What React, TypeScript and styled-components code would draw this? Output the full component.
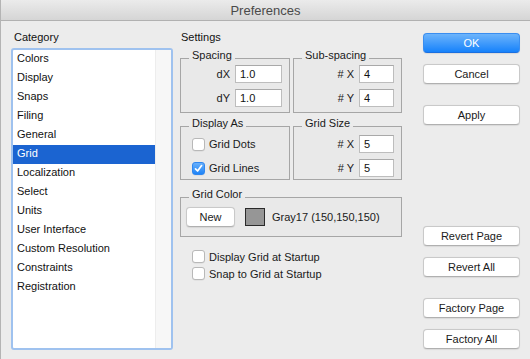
import React, { useState } from 'react';
import styled, { createGlobalStyle } from 'styled-components';

const GlobalStyle = createGlobalStyle`
  html, body {
    margin: 0;
    padding: 0;
    background: #ececec;
  }
  body {
    font-family: 'Liberation Sans', Arial, sans-serif;
    font-size: 11px;
    color: #1a1a1a;
  }
`;

const categories = [
  'Colors',
  'Display',
  'Snaps',
  'Filing',
  'General',
  'Grid',
  'Localization',
  'Select',
  'Units',
  'User Interface',
  'Custom Resolution',
  'Constraints',
  'Registration',
];

const Window = styled.div`
  width: 530px;
  height: 359px;
  box-sizing: border-box;
  border-left: 1px solid #b4b4b4;
  background: #ececec;
  display: flex;
  flex-direction: column;
  overflow: hidden;
`;

const TitleBar = styled.div`
  height: 20px;
  flex: none;
  border-bottom: 1px solid #b1b1b1;
  background: linear-gradient(#ebebeb, #d5d5d5);
  display: flex;
  align-items: center;
  justify-content: center;
  font-size: 13px;
  color: #4a4a4a;
`;

const Body = styled.div`
  flex: 1;
  display: flex;
  padding: 10px 10px 0 10px;
`;

const CategoryColumn = styled.div`
  width: 162px;
  display: flex;
  flex-direction: column;
`;

const Heading = styled.div`
  height: 13px;
  line-height: 13px;
  padding-left: 3px;
  color: #111;
`;

const ListBox = styled.div`
  margin-top: 4px;
  height: 302px;
  box-sizing: border-box;
  border: 2px solid #9fc2ef;
  border-radius: 3px;
  background: #fff;
  display: flex;
`;

const ListItems = styled.div`
  flex: 1;
`;

const ListItem = styled.div<{ $selected?: boolean }>`
  height: 19px;
  line-height: 17px;
  padding: 0 0 2px 4px;
  box-sizing: border-box;
  background: ${(p) => (p.$selected ? '#1b64d1' : 'transparent')};
  color: ${(p) => (p.$selected ? '#fff' : '#111')};
`;

const ScrollTrack = styled.div`
  width: 15px;
  border-left: 1px solid #ededed;
  background: #f7f7f7;
`;

const SettingsColumn = styled.div`
  width: 222px;
  margin-left: 7px;
  display: flex;
  flex-direction: column;
`;

const SettingsHeading = styled(Heading)`
  padding-left: 1px;
`;

const GroupGrid = styled.div<{ $top: number }>`
  display: grid;
  grid-template-columns: 110px 109px;
  column-gap: 3px;
  margin-top: ${(p) => p.$top}px;
`;

const Group = styled.div<{ $pt: number; $pb: number }>`
  position: relative;
  border: 1px solid #a6a6a6;
  background: #e9e9e9;
  padding: ${(p) => p.$pt}px 0 ${(p) => p.$pb}px;
  display: flex;
  flex-direction: column;
  gap: 4px;
`;

const GroupTitle = styled.span`
  position: absolute;
  top: -10px;
  left: 8px;
  padding: 0 3px;
  line-height: 13px;
  background: linear-gradient(#ececec 0 9px, #e9e9e9 9px);
`;

const FieldRow = styled.div`
  height: 20px;
  display: flex;
  align-items: center;
  justify-content: flex-end;
  gap: 5px;
  padding-right: 7px;
`;

const Input = styled.div<{ $w: number }>`
  width: ${(p) => p.$w}px;
  height: 18px;
  box-sizing: border-box;
  background: #fff;
  border: 1px solid #bdbdbd;
  border-top-color: #a9a9a9;
  line-height: 16px;
  padding-left: 4px;
  color: #111;
`;

const CheckRow = styled.label`
  height: 20px;
  display: flex;
  align-items: center;
  gap: 4px;
  padding-left: 11px;
`;

const Box = styled.span<{ $checked?: boolean }>`
  width: 13px;
  height: 13px;
  box-sizing: border-box;
  border-radius: 3px;
  display: inline-flex;
  align-items: center;
  justify-content: center;
  border: 1px solid ${(p) => (p.$checked ? '#2f87f0' : '#b8b8b8')};
  background: ${(p) => (p.$checked ? 'linear-gradient(#68b0fb, #1f84f7)' : '#fff')};
  box-shadow: 0 0.5px 0 rgba(0, 0, 0, 0.08);
`;

const ColorGroup = styled(Group)`
  margin-top: 17px;
  flex-direction: row;
  align-items: center;
  gap: 0;
  padding-left: 5px;
  height: 40px;
  box-sizing: border-box;
`;

const Swatch = styled.div`
  width: 20px;
  height: 18px;
  box-sizing: border-box;
  border: 1px solid #2a2a2a;
  background: #969696;
  margin: 0 7px 0 10px;
`;

const StartupList = styled.div`
  margin-top: 11px;
  display: flex;
  flex-direction: column;
`;

const StartupRow = styled(CheckRow)`
  height: 17px;
  padding-left: 12px;
`;

const ButtonColumn = styled.div`
  width: 97px;
  margin-left: 21px;
  display: flex;
  flex-direction: column;
`;

const Button = styled.button<{ $primary?: boolean; $top?: number; $w?: number }>`
  margin-top: ${(p) => p.$top ?? 0}px;
  width: ${(p) => (p.$w ? `${p.$w}px` : '100%')};
  height: 20px;
  box-sizing: border-box;
  border-radius: 4px;
  font-family: inherit;
  font-size: 11px;
  padding: 0;
  cursor: default;
  color: ${(p) => (p.$primary ? '#fff' : '#1a1a1a')};
  border: 1px solid ${(p) => (p.$primary ? '#3a8ef0' : '#c9c9c9')};
  border-bottom-color: ${(p) => (p.$primary ? '#1a6fe0' : '#b0b0b0')};
  background: ${(p) => (p.$primary ? 'linear-gradient(#6db4fb, #1682fb)' : '#fff')};
  box-shadow: 0 0.5px 1px rgba(0, 0, 0, 0.08);
`;

const Check = () => (
  <svg width="9" height="9" viewBox="0 0 9 9">
    <path d="M1.5 4.8 L3.6 7 L7.6 1.6" fill="none" stroke="#fff" strokeWidth="1.7" strokeLinecap="round" strokeLinejoin="round" />
  </svg>
);

export default function App() {
  const [selected, setSelected] = useState('Grid');
  const [dots, setDots] = useState(false);
  const [lines, setLines] = useState(true);

  return (
    <>
      <GlobalStyle />
      <Window>
        <TitleBar>Preferences</TitleBar>
        <Body>
          <CategoryColumn>
            <Heading>Category</Heading>
            <ListBox>
              <ListItems>
                {categories.map((c) => (
                  <ListItem key={c} $selected={c === selected} onClick={() => setSelected(c)}>
                    {c}
                  </ListItem>
                ))}
              </ListItems>
              <ScrollTrack />
            </ListBox>
          </CategoryColumn>

          <SettingsColumn>
            <SettingsHeading>Settings</SettingsHeading>
            <GroupGrid $top={14}>
              <Group $pt={5} $pb={4}>
                <GroupTitle>Spacing</GroupTitle>
                <FieldRow>
                  dX <Input $w={47}>1.0</Input>
                </FieldRow>
                <FieldRow>
                  dY <Input $w={47}>1.0</Input>
                </FieldRow>
              </Group>
              <Group $pt={5} $pb={4}>
                <GroupTitle>Sub-spacing</GroupTitle>
                <FieldRow>
                  # X <Input $w={35}>4</Input>
                </FieldRow>
                <FieldRow>
                  # Y <Input $w={35}>4</Input>
                </FieldRow>
              </Group>
            </GroupGrid>

            <GroupGrid $top={13}>
              <Group $pt={7} $pb={1}>
                <GroupTitle>Display As</GroupTitle>
                <CheckRow onClick={() => setDots(!dots)}>
                  <Box $checked={dots}>{dots && <Check />}</Box>
                  Grid Dots
                </CheckRow>
                <CheckRow onClick={() => setLines(!lines)}>
                  <Box $checked={lines}>{lines && <Check />}</Box>
                  Grid Lines
                </CheckRow>
              </Group>
              <Group $pt={7} $pb={1}>
                <GroupTitle>Grid Size</GroupTitle>
                <FieldRow>
                  # X <Input $w={35}>5</Input>
                </FieldRow>
                <FieldRow>
                  # Y <Input $w={35}>5</Input>
                </FieldRow>
              </Group>
            </GroupGrid>

            <ColorGroup $pt={0} $pb={0}>
              <GroupTitle>Grid Color</GroupTitle>
              <Button $w={49}>New</Button>
              <Swatch />
              Gray17 (150,150,150)
            </ColorGroup>

            <StartupList>
              <StartupRow>
                <Box />
                Display Grid at Startup
              </StartupRow>
              <StartupRow>
                <Box />
                Snap to Grid at Startup
              </StartupRow>
            </StartupList>
          </SettingsColumn>

          <ButtonColumn>
            <Button $primary $top={2}>OK</Button>
            <Button $top={11}>Cancel</Button>
            <Button $top={21}>Apply</Button>
            <Button $top={101}>Revert Page</Button>
            <Button $top={11}>Revert All</Button>
            <Button $top={21}>Factory Page</Button>
            <Button $top={11}>Factory All</Button>
          </ButtonColumn>
        </Body>
      </Window>
    </>
  );
}
